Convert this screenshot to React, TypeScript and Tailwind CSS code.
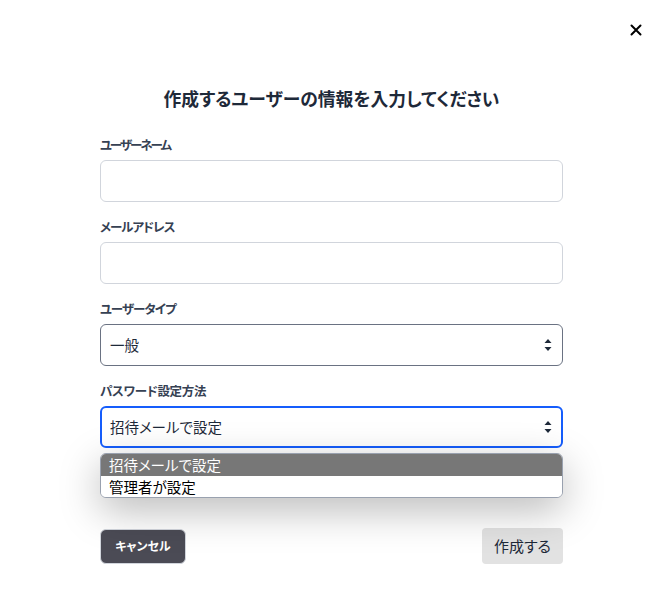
import React from 'react';

const Arrows = () => (
  <svg width="8" height="14" viewBox="0 0 8 14" className="text-gray-800">
    <path d="M4 1 L7.5 5 H0.5 Z" fill="currentColor" />
    <path d="M4 13 L7.5 9 H0.5 Z" fill="currentColor" />
  </svg>
);

export default function App() {
  return (
    <div
      className="relative w-[663px] h-[603px] bg-white text-gray-800 [font-feature-settings:'palt']"
      style={{ fontFamily: '"Noto Sans CJK JP", "Noto Sans", sans-serif' }}
    >
      <button className="absolute right-[19px] top-[22px] w-4 h-4 flex items-center justify-center text-black" aria-label="close">
        <svg width="12" height="12" viewBox="0 0 12 12">
          <path d="M1.5 1.5 L10.5 10.5 M10.5 1.5 L1.5 10.5" stroke="currentColor" strokeWidth="2" strokeLinecap="round" />
        </svg>
      </button>

      <div className="flex flex-col pt-[84px] px-[100px]">
        <h1 className="text-center text-[17.8px] font-bold leading-[28px] text-gray-800">
          作成するユーザーの情報を入力してください
        </h1>

        <div className="mt-[23px] flex flex-col">
          <label className="text-[12.5px] font-bold text-gray-700 leading-[20px] tracking-[-2px]">ユーザーネーム</label>
          <input className="mt-[5px] h-[42px] w-[463px] rounded-md border border-gray-300 bg-white px-2" />
        </div>

        <div className="mt-[15px] flex flex-col">
          <label className="text-[12.5px] font-bold text-gray-700 leading-[20px] tracking-[-1px]">メールアドレス</label>
          <input className="mt-[5px] h-[42px] w-[463px] rounded-md border border-gray-300 bg-white px-2" />
        </div>

        <div className="mt-[15px] flex flex-col">
          <label className="text-[12.5px] font-bold text-gray-700 leading-[20px] tracking-[-1px]">ユーザータイプ</label>
          <div className="mt-[5px] h-[42px] w-[463px] rounded-md border border-gray-500 bg-white pl-[9px] pr-[10px] flex items-center justify-between">
            <span className="text-[14.5px] text-gray-800">一般</span>
            <Arrows />
          </div>
        </div>

        <div className="mt-[15px] flex flex-col">
          <label className="text-[12.5px] font-bold text-gray-700 leading-[20px] tracking-[-0.3px]">パスワード設定方法</label>
          <div className="mt-[5px] h-[42px] w-[463px] rounded-md border-2 border-blue-600 bg-white pl-[8px] pr-[9px] flex items-center justify-between">
            <span className="text-[14.5px] text-gray-800">招待メールで設定</span>
            <Arrows />
          </div>
          <div className="relative">
            <div className="absolute left-0 top-[5px] w-[463px] overflow-hidden rounded-md border border-gray-400 bg-white shadow-[0_12px_40px_rgba(0,0,0,0.28)] text-[14.5px] leading-[21.5px]">
              <div className="bg-[#777777] text-white pl-[8px]">招待メールで設定</div>
              <div className="bg-white text-black pl-[8px]">管理者が設定</div>
            </div>
          </div>
        </div>

        <div className="mt-[80px] flex justify-between items-center w-[463px]">
          <button className="h-[35px] w-[86px] rounded-md bg-[#4b4b55] border border-gray-300 text-white text-[12px] font-bold">
            キャンセル
          </button>
          <button className="h-[36px] w-[81px] rounded-sm bg-[#e2e2e2] text-gray-800 text-[15px]">
            作成する
          </button>
        </div>
      </div>
    </div>
  );
}
